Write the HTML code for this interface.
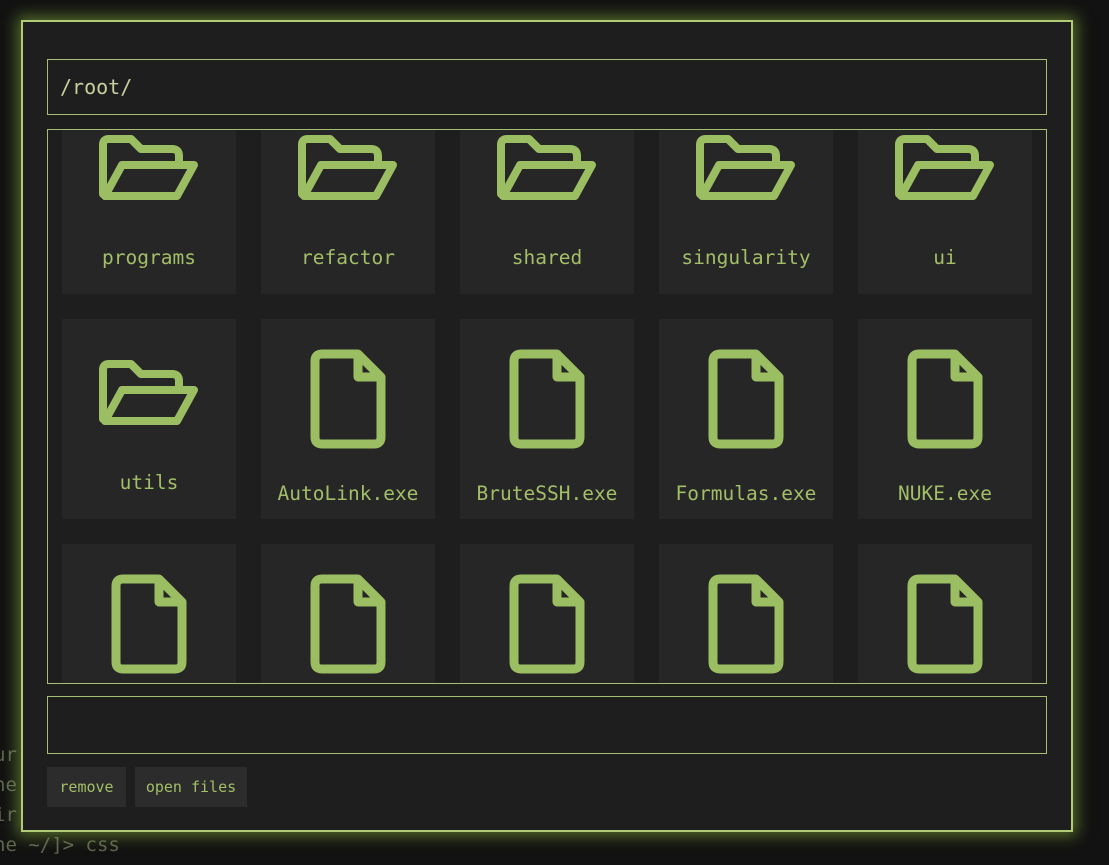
<!DOCTYPE html>
<html><head><style>
body{margin:0;width:1109px;height:865px;background:#121212;overflow:hidden;position:relative;font-family:"DejaVu Sans Mono","Liberation Mono",monospace;}
.term{position:absolute;left:-6px;color:#5e6550;font-size:19px;line-height:30px;top:740px;}
.modal{position:absolute;left:21px;top:20px;width:1048px;height:808px;border:2px solid #b0cc78;background:#1e1e1e;box-shadow:0 0 14px 4px rgba(140,180,60,.55);}
.path{position:absolute;left:24px;top:37px;width:1000px;height:56px;border:1px solid #a6bf72;color:#c6cf9e;font-size:20px;line-height:55px;padding-left:12px;box-sizing:border-box;}
.grid{position:absolute;left:24px;top:107px;width:1000px;height:555px;border:1px solid #a6bf72;box-sizing:border-box;overflow:hidden;}
.tile{position:absolute;width:174px;height:200px;background:#262626;}
.lbl{position:absolute;left:0;right:0;text-align:center;color:#a3be68;font-size:19.5px;}
.box2{position:absolute;left:24px;top:674px;width:1000px;height:58px;border:1px solid #a6bf72;box-sizing:border-box;}
.btn{position:absolute;top:745px;height:40px;background:#2c2c2c;color:#a3be68;font-size:15px;line-height:40px;text-align:center;}
</style></head><body>
<div class="term">ur<br>ne<br>ir<br>ne ~/]&gt; css</div>
<div class="modal">
<div class="path">/root/</div>
<div class="grid" id="g"></div>
<div class="box2"></div>
<div class="btn" style="left:24px;width:79px">remove</div>
<div class="btn" style="left:112px;width:112px">open files</div>
</div>
<script>
var g=document.getElementById('g');
var folder='<svg width="102" height="68" viewBox="0 0 102 68" style="position:absolute;left:36px" fill="none" stroke="#9cbe62" stroke-width="8" stroke-linejoin="round" stroke-linecap="round"><path d="M5 60 V11 Q5 5 11 5 H33 L43 15 H74 Q81 15 81 22 V30"/><path d="M7 62 L24 31 H96 L79 62 Z"/></svg>';
var file='<svg width="76" height="100" viewBox="0 0 76 100" style="position:absolute;left:49px" fill="none" stroke="#9cbe62" stroke-width="9" stroke-linejoin="round"><path d="M12 5 H48 L71 28 V88 Q71 95 64 95 H12 Q5 95 5 88 V12 Q5 5 12 5 Z"/><path d="M48 5 V28 H71"/></svg>';
var items=[["programs",1],["refactor",1],["shared",1],["singularity",1],["ui",1],["utils",1],["AutoLink.exe",0],["BruteSSH.exe",0],["Formulas.exe",0],["NUKE.exe",0],["",0],["",0],["",0],["",0],["",0]];
items.forEach(function(it,i){var r=Math.floor(i/5),c=i%5;var t=document.createElement('div');t.className='tile';t.style.left=(14+c*199)+'px';t.style.top=(-36+r*225)+'px';
if(it[1]){t.innerHTML=folder.replace('style="','style="top:40px;')+'<div class="lbl" style="top:152px">'+it[0]+'</div>';}
else{t.innerHTML=file.replace('style="','style="top:30px;')+'<div class="lbl" style="top:163px">'+it[0]+'</div>';}
g.appendChild(t);});
</script>
</body></html>
